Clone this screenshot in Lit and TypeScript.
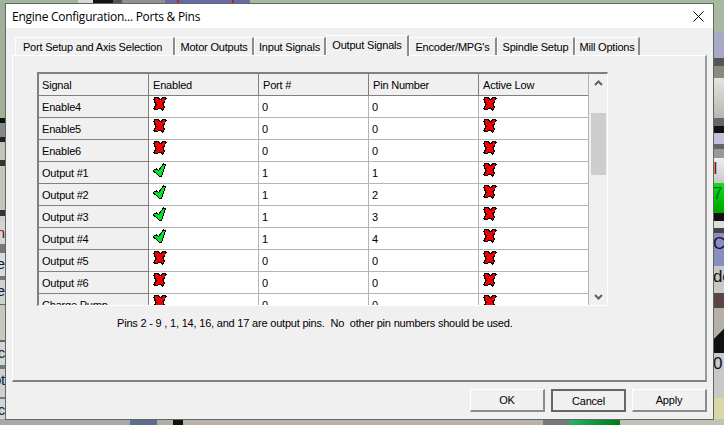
import { LitElement, html, css } from "lit";
import { customElement } from "lit/decorators.js";

type Seg = [number, string, string?, string?];

const TOP: Seg[] = [[78, "#a5b49f"], [15, "#d8d8d4"], [20, "#141414"], [9, "#555"], [43, "#8f8f8f"], [12, "#6a6aa8"], [2, "#c02020"], [53, "#6a6aa8"], [2, "#c02020"], [16, "#6a6aa8"], [474, "#a9b8a0"]];
const BOTTOM: Seg[] = [[130, "#a8a8a8"], [27, "#5f6d8c"], [16, "#b0aca6"], [10, "#111"], [360, "#b8b2aa"], [26, "#777"], [51, "linear-gradient(90deg,#28b070,#007a10)"], [104, "#c2c0b8"]];
const LEFT: Seg[] = [
  [115, "#a0b09a"], [5, "#111"], [14, "#888"], [5, "#222"], [18, "#c6c3b8"], [6, "#333"], [44, "#c8c5b8"], [6, "#333"], [6, "#d0cec8"],
  [22, "#d4d4d4", "in", "#701010"], [9, "#777"], [23, "#dcdcdc", "e", "#123"], [4, "#777"], [24, "#d0d0d0", "e", "#123"],
  [1, "#666"], [35, "#c8c8c0"], [2, "#666"], [23, "#d4d4d4", "c", "#123"], [4, "#777"], [28, "#d0d0d0", "ot", "#123"], [2, "#777"], [25, "#d4d4d4", "c", "#123"],
];
const RIGHT: Seg[] = [
  [30, "#a9b8a0"], [25, "#a8a8c8"], [8, "#555"], [12, "#8a8a80"], [40, "linear-gradient(#e4e4e0,#b8b8b0)"], [8, "#666"], [7, "#111"], [11, "#c0c0d8"], [5, "#666"],
  [9, "#999"], [25, "linear-gradient(#eee,#c8c8c8)", "I", "#701010"], [30, "linear-gradient(#10e010,#00a000)", "7", "#064"], [8, "#111"], [7, "#ddd"], [5, "#444"], [33, "#8c8cc4", "C", "#112"],
  [27, "#c8c8c8", "de", "#111"], [15, "#5a4444"], [15, "#b4b0a8"], [30, "linear-gradient(135deg,#b4b0a8 40%,#111 42%)"], [45, "#c8c8c4", "0", "#112"], [22, "#d8d8a4"], [4, "#c0c0b8"],
];
const TABS: [string, number][] = [["Port Setup and Axis Selection", 160], ["Motor Outputs", 79], ["Input Signals", 72], ["Output Signals", 83], ["Encoder/MPG's", 88], ["Spindle Setup", 78], ["Mill Options", 65]];
const HEAD = ["Signal", "Enabled", "Port #", "Pin Number", "Active Low"];
const ROWS: [string, boolean, number, number][] = [
  ["Enable4", false, 0, 0], ["Enable5", false, 0, 0], ["Enable6", false, 0, 0],
  ["Output #1", true, 1, 1], ["Output #2", true, 1, 2], ["Output #3", true, 1, 3], ["Output #4", true, 1, 4],
  ["Output #5", false, 0, 0], ["Output #6", false, 0, 0], ["Charge Pump", false, 0, 0],
];

const cross = () => html`<svg class="ico" viewBox="0 0 14 14" width="14" height="14">
  <polygon points="1.5,1 5,0.5 7,3 10,0.5 13,1 12.5,3.5 10,6.5 11.5,10.5 9.5,13 7,11 3,13 1,11.5 3,7.5 1,3" fill="#f00000" stroke="#000" stroke-width="1.2" stroke-linejoin="round" />
</svg>`;
const tick = () => html`<svg class="ico" viewBox="0 0 14 14" width="14" height="14">
  <polygon points="0,7.5 3.5,6 5.5,7.5 10.5,1 12.5,2 8.5,13.5 6,13" fill="#00e828" stroke="#000" stroke-width="1" stroke-linejoin="round" />
</svg>`;
const flag = (v: boolean) => (v ? tick() : cross());

const strip = (segs: Seg[], cls: string) => html`<div class=${cls}>
  ${segs.map(
    ([s, c, t, tc]) => html`<div class="seg" style="flex-basis:${s}px;background:${c};color:${tc ?? "#000"}">${t ?? ""}</div>`
  )}
</div>`;

@customElement("app-root")
export class AppRoot extends LitElement {
  static styles = css`
    :host {
      display: block;
      position: relative;
      width: 724px;
      height: 425px;
      overflow: hidden;
      font-family: "Liberation Sans", Arial, sans-serif;
      font-size: 11px;
      letter-spacing: -0.2px;
      color: #000;
    }
    .backdrop { display: flex; flex-direction: column; width: 724px; height: 425px; }
    .hstrip { display: flex; flex: none; }
    .hstrip.top { height: 3px; }
    .hstrip.bot { height: 6px; }
    .mid { display: flex; justify-content: space-between; height: 416px; flex: none; }
    .vleft, .vright { display: flex; flex-direction: column; overflow: hidden; }
    .vleft { width: 5px; }
    .vright { width: 11px; }
    .seg { flex: none; overflow: hidden; white-space: nowrap; font-size: 17px; line-height: 22px; }
    .vleft .seg { direction: rtl; font-size: 15px; }
    .vright .seg { font-size: 17px; }

    .dialog {
      position: absolute;
      left: 5px;
      top: 3px;
      width: 707px;
      height: 415px;
      border: 1px solid #5e6a5e;
      background: #f0f0f0;
      display: flex;
      flex-direction: column;
    }
    .title {
      height: 24px;
      flex: none;
      background: #fff;
      display: flex;
      align-items: center;
      justify-content: space-between;
      padding: 0 9px 0 6px;
      font-family: "Open Sans", sans-serif;
      font-size: 12px;
      letter-spacing: -0.26px;
    }
    .close { display: block; }
    .body { flex: 1; display: flex; flex-direction: column; padding: 7px 6px 0 6px; }
    .tabs { display: flex; align-items: flex-end; height: 20px; margin-left: 3px; flex: none; position: relative; z-index: 1; }
    .tab {
      box-sizing: border-box;
      height: 18px;
      text-align: center;
      line-height: 19px;
      background: #f0f0f0;
      border-top: 1px solid #fff;
      border-left: 1px solid #fff;
      border-right: 2px solid #8c8c8c;
      white-space: nowrap;
    }
    .tab:first-child { text-indent: -4px; }
    .tab.active {
      height: 21px;
      margin-bottom: -1px;
      line-height: 18px;
      padding-bottom: 3px;
    }
    .panel {
      box-sizing: border-box;
      width: 695px;
      height: 327px;
      flex: none;
      border-top: 1px solid #fff;
      border-left: 1px solid #fff;
      border-right: 2px solid #999;
      border-bottom: 2px solid #808080;
      padding: 16px 0 0 24px;
    }
    .table {
      box-sizing: content-box;
      width: 568px;
      height: 231px;
      border-top: 2px solid #808080;
      border-left: 2px solid #808080;
      border-right: 1px solid #fff;
      border-bottom: 1px solid #fff;
      display: flex;
      overflow: hidden;
    }
    .grid { display: grid; grid-template-columns: repeat(5, 110px); grid-auto-rows: 22px; width: 550px; flex: none; }
    .cell {
      box-sizing: border-box;
      background: #fff;
      border-right: 1px solid #b4b4b4;
      border-bottom: 1px solid #b4b4b4;
      padding-left: 3px;
      line-height: 22px;
      overflow: hidden;
      white-space: nowrap;
      position: relative;
    }
    .cell.hd, .cell.lab {
      background: #f0f0f0;
      border-right-color: #808080;
      border-bottom-color: #808080;
    }
    .cell.hd { padding-left: 4px; }
    .cell.hd.first { padding-left: 3px; }
    .cell.hd.last { border-right-color: #b4b4b4; }
    .ico { display: block; margin: 1px 0 0 1px; shape-rendering: crispEdges; }
    .bar { width: 18px; flex: none; background: #f0f0f0; display: flex; flex-direction: column; align-items: center; }
    .arrow { height: 17px; flex: none; display: flex; align-items: center; justify-content: center; }
    .thumb { width: 15px; height: 62px; flex: none; background: #cdcdcd; margin-top: 22px; }
    .spacer { flex: 1; }
    .note { margin: 10px 0 0 80px; white-space: pre; line-height: 14px; }
    .footer { display: flex; justify-content: flex-end; gap: 6px; padding: 7px 0 0 0; }
    .btn {
      box-sizing: border-box;
      width: 75px;
      height: 23px;
      background: #f0f0f0;
      border-top: 1px solid #fff;
      border-left: 1px solid #fff;
      border-right: 2px solid #8c8c8c;
      border-bottom: 2px solid #8c8c8c;
      display: flex;
      align-items: center;
      justify-content: center;
    }
    .btn.def { border: 2px solid #666; }
  `;

  render() {
    return html`
      <div class="backdrop">
        ${strip(TOP, "hstrip top")}
        <div class="mid">${strip(LEFT, "vleft")}${strip(RIGHT, "vright")}</div>
        ${strip(BOTTOM, "hstrip bot")}
      </div>
      <div class="dialog">
        <div class="title">
          <span>Engine Configuration... Ports &amp; Pins</span>
          <svg class="close" width="11" height="11" viewBox="0 0 11 11"><path d="M0.5 0.5 L10.5 10.5 M10.5 0.5 L0.5 10.5" stroke="#000" stroke-width="1" fill="none" /></svg>
        </div>
        <div class="body">
          <div class="tabs">
            ${TABS.map(([t, w]) => html`<div class="tab ${t === "Output Signals" ? "active" : ""}" style="width:${w}px">${t}</div>`)}
          </div>
          <div class="panel">
            <div class="table">
              <div class="grid">
                ${HEAD.map((h, i) => html`<div class="cell hd ${i === 0 ? "first" : ""} ${i === 4 ? "last" : ""}">${h}</div>`)}
                ${ROWS.map(
                  ([n, en, port, pin]) => html`
                    <div class="cell lab">${n}</div>
                    <div class="cell">${flag(en)}</div>
                    <div class="cell">${port}</div>
                    <div class="cell">${pin}</div>
                    <div class="cell">${cross()}</div>
                  `
                )}
              </div>
              <div class="bar">
                <div class="arrow">
                  <svg width="9" height="6" viewBox="0 0 9 6"><path d="M1 5 L4.5 1.5 L8 5" stroke="#606060" stroke-width="2" fill="none" /></svg>
                </div>
                <div class="thumb"></div>
                <div class="spacer"></div>
                <div class="arrow">
                  <svg width="9" height="6" viewBox="0 0 9 6"><path d="M1 1 L4.5 4.5 L8 1" stroke="#606060" stroke-width="2" fill="none" /></svg>
                </div>
              </div>
            </div>
            <div class="note">Pins 2 - 9 , 1, 14, 16, and 17 are output pins.  No  other pin numbers should be used.</div>
          </div>
          <div class="footer">
            <div class="btn">OK</div>
            <div class="btn def">Cancel</div>
            <div class="btn">Apply</div>
          </div>
        </div>
      </div>
    `;
  }
}
